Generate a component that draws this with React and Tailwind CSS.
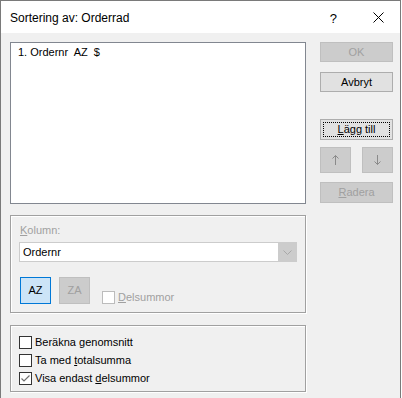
import React from 'react';

const ui = "font-['Liberation_Sans',Arial,sans-serif] text-[11px] leading-[13px]";

function Btn({ children, className = '', disabled, focus }) {
    return (
        <div
            className={`flex items-center justify-center border ${
                disabled ? 'border-[#bfbfbf] bg-[#cccccc] text-[#a0a0a0]' : 'border-[#adadad] bg-[#e1e1e1] text-black'
            } ${className}`}
        >
            {focus ? (
                <div className="flex h-[calc(100%-4px)] w-[calc(100%-4px)] items-center justify-center border border-dotted border-black">
                    {children}
                </div>
            ) : (
                children
            )}
        </div>
    );
}

function Check({ checked, disabled }) {
    return (
        <div
            className={`flex h-[13px] w-[13px] shrink-0 items-center justify-center border bg-white ${
                disabled ? 'border-[#bcbcbc]' : 'border-[#333333]'
            }`}
        >
            {checked && (
                <svg width="11" height="11" viewBox="0 0 11 11">
                    <path d="M1.5 5.5 L4 8 L9.5 2.5" fill="none" stroke="#707070" strokeWidth="1.2" />
                </svg>
            )}
        </div>
    );
}

function Arrow({ down }) {
    return (
        <svg width="9" height="12" viewBox="0 0 9 12" className={down ? 'rotate-180' : ''}>
            <path d="M4.5 1.5 V11" stroke="#8a8a8a" strokeWidth="1" />
            <path d="M1.5 4.5 L4.5 1.5 L7.5 4.5" fill="none" stroke="#8a8a8a" strokeWidth="1" />
        </svg>
    );
}

export default function App() {
    return (
        <div className="h-[398px] w-[402px] overflow-hidden bg-white">
            <div className={`flex h-[398px] w-[401px] flex-col border-x border-t border-[#7a7a7a] bg-[#f0f0f0] ${ui}`}>
                {/* title bar */}
                <div className="flex h-[32px] shrink-0 items-center bg-white pl-[9px] font-['Liberation_Sans',Arial,sans-serif] text-[12px] text-black">
                    <span className="pt-[2px]">Sortering av: Orderrad</span>
                    <span className="ml-auto pt-[2px] text-[13px]">?</span>
                    <div className="ml-[36px] mr-[16px] flex items-center pt-[1px]">
                        <svg width="11" height="11" viewBox="0 0 11 11">
                            <path d="M0.5 0.5 L10.5 10.5 M10.5 0.5 L0.5 10.5" stroke="#000" strokeWidth="1" />
                        </svg>
                    </div>
                </div>

                <div className="flex pl-[9px]">
                    {/* left column */}
                    <div className="flex w-[296px] flex-col pt-[9px]">
                        <div className="h-[162px] border border-[#828790] bg-white px-[7px] py-[3px]">
                            <div className="whitespace-pre">1. Ordernr  AZ  $</div>
                        </div>

                        <div className="mt-[11px] flex h-[98px] flex-col border border-[#a0a0a0] pl-[8px] pt-[8px] shadow-[inset_1px_1px_0_#fff,1px_1px_0_#fff]">
                            <div className="ml-[1px] text-[#a0a0a0]">
                                <span className="underline">K</span>olumn:
                            </div>
                            <div className="mt-[5px] flex h-[20px] w-[278px] border border-[#cccccc] bg-white">
                                <div className="flex flex-1 items-center pl-[3px]">Ordernr</div>
                                <div className="flex w-[18px] items-center justify-center bg-[#cccccc]">
                                    <svg width="9" height="5" viewBox="0 0 9 5">
                                        <path d="M0.5 0.5 L4.5 4.5 L8.5 0.5" fill="none" stroke="#a8a8a8" strokeWidth="1" />
                                    </svg>
                                </div>
                            </div>
                            <div className="mt-[15px] flex items-end">
                                <div className="ml-[1px] flex h-[27px] w-[31px] items-center justify-center border border-[#0078d7] bg-[#cce4f7]">
                                    AZ
                                </div>
                                <div className="ml-[8px] flex h-[27px] w-[31px] items-center justify-center border border-[#bfbfbf] bg-[#cccccc] text-[#a0a0a0]">
                                    ZA
                                </div>
                                <div className="mb-0 ml-[12px] flex items-center gap-[3px] text-[#a0a0a0]">
                                    <Check disabled />
                                    <span>
                                        <span className="underline">D</span>elsummor
                                    </span>
                                </div>
                            </div>
                        </div>

                        <div className="mt-[12px] flex h-[67px] flex-col gap-[5px] border border-[#a0a0a0] pl-[8px] pt-[10px] shadow-[inset_1px_1px_0_#fff,1px_1px_0_#fff]">
                            <div className="flex h-[13px] items-center gap-[3px]">
                                <Check />
                                <span>Beräkna genomsnitt</span>
                            </div>
                            <div className="flex h-[13px] items-center gap-[3px]">
                                <Check />
                                <span>
                                    Ta med <span className="underline">t</span>otalsumma
                                </span>
                            </div>
                            <div className="flex h-[13px] items-center gap-[3px]">
                                <Check checked />
                                <span>
                                    Visa endast <span className="underline">d</span>elsummor
                                </span>
                            </div>
                        </div>
                    </div>

                    {/* right column */}
                    <div className="ml-[14px] flex w-[73px] flex-col pt-[9px]">
                        <Btn disabled className="h-[20px]">OK</Btn>
                        <Btn className="mt-[10px] h-[20px]">Avbryt</Btn>
                        <Btn focus className="mt-[27px] h-[21px]">
                            <span>
                                <span className="underline">L</span>ägg till
                            </span>
                        </Btn>
                        <div className="mt-[7px] flex justify-between">
                            <Btn disabled className="h-[26px] w-[31px]">
                                <Arrow />
                            </Btn>
                            <Btn disabled className="h-[26px] w-[31px]">
                                <Arrow down />
                            </Btn>
                        </div>
                        <Btn disabled className="mt-[9px] h-[21px]">
                            <span>
                                <span className="underline">R</span>adera
                            </span>
                        </Btn>
                    </div>
                </div>
            </div>
        </div>
    );
}
